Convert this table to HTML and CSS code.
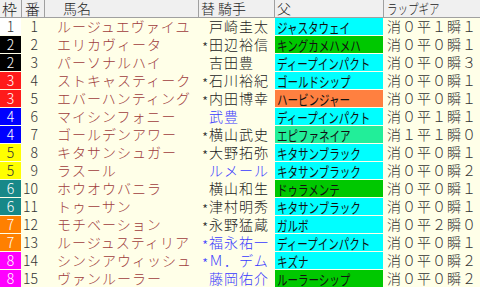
FILE: index.html
```html
<!DOCTYPE html>
<html lang="ja">
<head>
<meta charset="utf-8">
<link rel="stylesheet" href="styles.css">
</head>
<body>
<div class="table">
  <div class="head">
    <div class="h h-waku">枠</div>
    <div class="h h-ban">番</div>
    <div class="h h-name">馬名</div>
    <div class="h h-jk">替 騎手</div>
    <div class="h h-sire">父</div>
    <div class="h h-lap"><span class="cond">ラップギア</span></div>
  </div>
  <div class="body">
    <div class="waku f1">1</div><div class="ban">1</div><div class="name">ルージュエヴァイユ</div><div class="jk"><span class="mark"></span><span class="jn">戸崎圭太</span></div><div class="sire cyan"><span class="cond">ジャスタウェイ</span></div><div class="lap">消０平１瞬１</div>
    <div class="waku f2">2</div><div class="ban">2</div><div class="name">エリカヴィータ</div><div class="jk"><span class="mark">*</span><span class="jn">田辺裕信</span></div><div class="sire green"><span class="cond">キングカメハメハ</span></div><div class="lap">消０平０瞬１</div>
    <div class="waku f2">2</div><div class="ban">3</div><div class="name">パーソナルハイ</div><div class="jk"><span class="mark"></span><span class="jn">吉田豊</span></div><div class="sire cyan"><span class="cond">ディープインパクト</span></div><div class="lap">消０平０瞬３</div>
    <div class="waku f3">3</div><div class="ban">4</div><div class="name">ストキャスティーク</div><div class="jk"><span class="mark">*</span><span class="jn">石川裕紀</span></div><div class="sire cyan"><span class="cond">ゴールドシップ</span></div><div class="lap">消０平０瞬１</div>
    <div class="waku f3">3</div><div class="ban">5</div><div class="name">エバーハンティング</div><div class="jk"><span class="mark">*</span><span class="jn">内田博幸</span></div><div class="sire orange"><span class="cond">ハービンジャー</span></div><div class="lap">消０平０瞬１</div>
    <div class="waku f4">4</div><div class="ban">6</div><div class="name">マイシンフォニー</div><div class="jk blue"><span class="mark"></span><span class="jn">武豊</span></div><div class="sire cyan"><span class="cond">ディープインパクト</span></div><div class="lap">消０平１瞬１</div>
    <div class="waku f4">4</div><div class="ban">7</div><div class="name">ゴールデンアワー</div><div class="jk"><span class="mark">*</span><span class="jn">横山武史</span></div><div class="sire spring"><span class="cond">エピファネイア</span></div><div class="lap">消１平１瞬０</div>
    <div class="waku f5">5</div><div class="ban">8</div><div class="name">キタサンシュガー</div><div class="jk"><span class="mark">*</span><span class="jn">大野拓弥</span></div><div class="sire cyan"><span class="cond">キタサンブラック</span></div><div class="lap">消０平０瞬１</div>
    <div class="waku f5">5</div><div class="ban">9</div><div class="name">ラスール</div><div class="jk blue"><span class="mark"></span><span class="jn">ルメール</span></div><div class="sire cyan"><span class="cond">キタサンブラック</span></div><div class="lap">消０平０瞬２</div>
    <div class="waku f6">6</div><div class="ban">10</div><div class="name">ホウオウバニラ</div><div class="jk"><span class="mark"></span><span class="jn">横山和生</span></div><div class="sire green"><span class="cond">ドゥラメンテ</span></div><div class="lap">消０平０瞬１</div>
    <div class="waku f6">6</div><div class="ban">11</div><div class="name">トゥーサン</div><div class="jk"><span class="mark">*</span><span class="jn">津村明秀</span></div><div class="sire cyan"><span class="cond">キタサンブラック</span></div><div class="lap">消０平０瞬１</div>
    <div class="waku f7">7</div><div class="ban">12</div><div class="name">モチベーション</div><div class="jk"><span class="mark">*</span><span class="jn">永野猛蔵</span></div><div class="sire cyan"><span class="cond">ガルボ</span></div><div class="lap">消０平２瞬０</div>
    <div class="waku f7">7</div><div class="ban">13</div><div class="name">ルージュスティリア</div><div class="jk blue"><span class="mark">*</span><span class="jn">福永祐一</span></div><div class="sire cyan"><span class="cond">ディープインパクト</span></div><div class="lap">消０平０瞬１</div>
    <div class="waku f8">8</div><div class="ban">14</div><div class="name">シンシアウィッシュ</div><div class="jk blue"><span class="mark">*</span><span class="jn">Ｍ．デム</span></div><div class="sire cyan"><span class="cond">キズナ</span></div><div class="lap">消０平０瞬２</div>
    <div class="waku f8">8</div><div class="ban">15</div><div class="name">ヴァンルーラー</div><div class="jk blue"><span class="mark"></span><span class="jn">藤岡佑介</span></div><div class="sire green"><span class="cond">ルーラーシップ</span></div><div class="lap">消０平０瞬２</div>
  </div>
</div>
</body>
</html>
```
FILE: styles.css
```css
html, body {
  margin: 0;
  padding: 0;
  background: #ffffe8;
}
body {
  width: 480px;
  height: 287px;
  overflow: hidden;
  font-family: "Noto Sans CJK JP", "Noto Sans", sans-serif;
  font-weight: 300;
  color: #333;
}
.head, .body {
  display: grid;
  grid-template-columns: 21px 22px 153px 75px 108px 96px;
  column-gap: 1px;
}
.head {
  height: 17px;
  background: #a0a0a0;
  border-bottom: 1px solid #a0a0a0;
}
.h {
  background: #f0f0f0;
  font-size: 15px;
  line-height: 17px;
  color: #222;
  white-space: nowrap;
}
.h-waku { padding-left: 2px; }
.h-ban { padding-left: 3px; }
.h-name { padding-left: 18px; font-size: 14px; }
.h-jk { padding-left: 2px; font-size: 14px; }
.h-sire { padding-left: 2px; font-size: 14px; }
.h-lap { padding-left: 3px; font-size: 14px; }
.body {
  grid-auto-rows: 17px;
  row-gap: 1px;
}
.body > div {
  line-height: 17px;
  white-space: nowrap;
}
.waku {
  text-align: center;
  font-size: 14px;
  color: #fff;
}
.f1 { background: #ffffff; color: #333; }
.f2 { background: #000000; }
.f3 { background: #ff1a1a; }
.f4 { background: #0000ff; }
.f5 { background: #ffff00; color: #333; }
.f6 { background: #178888; }
.f7 { background: #ff8000; }
.f8 { background: #ff00ff; }
.ban {
  text-align: right;
  padding-right: 6px;
  font-size: 14px;
}
.name {
  padding-left: 12px;
  font-size: 14px;
  letter-spacing: 1px;
  color: #a03c3c;
}
.jk {
  font-size: 14px;
  letter-spacing: 1px;
  color: #222;
  display: flex;
}
.jk.blue { color: #3a3aff; }
.mark {
  width: 7px;
  margin-left: 3px;
  flex: none;
  letter-spacing: 0;
  transform: translateY(3px);
}
.jn { flex: none; }
.sire {
  padding-left: 2px;
  color: #111;
  font-weight: 400;
}
.cond {
  display: inline-block;
  font-size: 14px;
  transform: scaleX(0.75);
  transform-origin: left center;
}
.h-lap .cond { font-weight: 300; }
.cyan { background: #00ffff; }
.green { background: #00c800; }
.orange { background: #ff8040; }
.spring { background: #22ee99; }
.lap {
  padding-left: 3px;
  font-size: 14px;
  letter-spacing: 1px;
  color: #333;
}
```
